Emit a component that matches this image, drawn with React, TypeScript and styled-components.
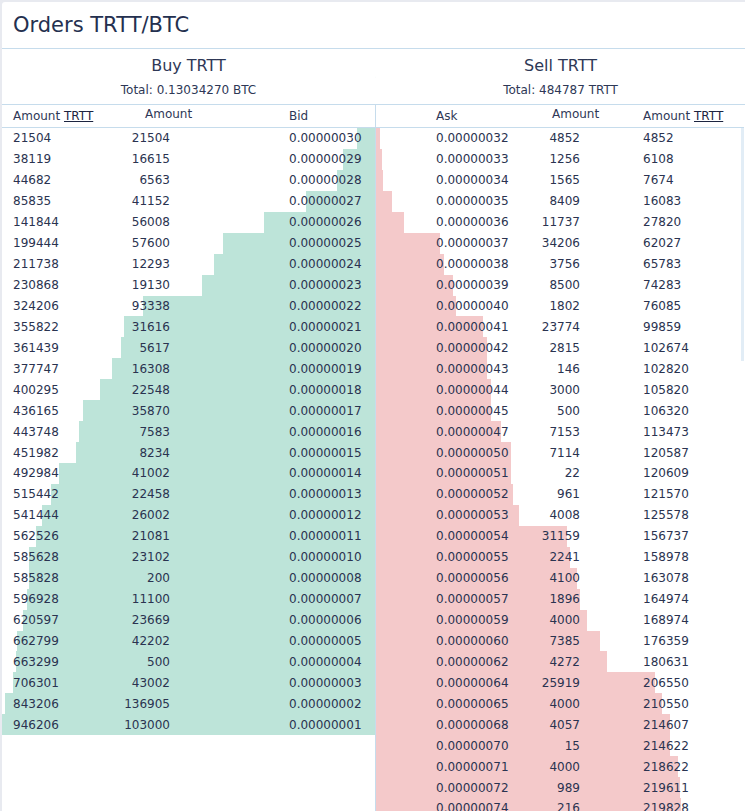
import React from 'react';
import styled, { createGlobalStyle } from 'styled-components';

const GlobalStyle = createGlobalStyle`
  html, body {
    margin: 0;
    padding: 0;
    background: #e8eaf0;
    overflow: hidden;
  }
  body {
    font-family: "DejaVu Sans", Verdana, sans-serif;
    color: #2a3350;
  }
`

const Card = styled.div`
  margin: 2px 0 0 2px;
  width: 743px;
  height: calc(100vh - 2px);
  display: flex;
  flex-direction: column;
  background: #FFFFFF;
  border-top-left-radius: 3px;
  overflow: hidden;
`
const Title = styled.div`
  height: 46px;
  display: flex;
  align-items: center;
  padding-left: 11px;
  border-bottom: 1px solid #c6dcec;
  font-size: 21px;
  color: #24304f;
`
const Summary = styled.div`
  display: grid;
  grid-template-columns: 373px 1px 369px;
  border-bottom: 1px solid #c6dcec;
  height: 55px;
`
const SideHead = styled.div`
  display: flex;
  flex-direction: column;
  align-items: center;
  padding-top: 7px;
`
const SideName = styled.div`
  font-size: 16px;
  line-height: 20px;
  color: #2e3856;
`
const SideTotal = styled.div`
  margin-top: 6px;
  font-size: 12px;
  line-height: 16px;
  color: #2e3856;
`
const Swap = styled.div`
  display: flex;
  justify-content: center;
  align-items: center;
`
const Books = styled.div`
  flex: 1;
  min-height: 0;
  display: grid;
  grid-template-columns: 373px 369px;
`
const Book = styled.div<{ $sell?: boolean }>`
  display: flex;
  flex-direction: column;
  min-height: 0;
  border-left: ${p => p.$sell ? '1px solid #c6dcec' : '0'};
`
const HeadRow = styled.div<{ $sell?: boolean }>`
  height: 22px;
  display: grid;
  grid-template-columns: ${p => p.$sell ? '116px 91px 1fr' : '132px 144px 1fr'};
  align-items: center;
  padding-left: ${p => p.$sell ? '60px' : '11px'};
  border-bottom: 1px solid #c6dcec;
  font-size: 12px;
  color: #2e3856;
`
const HeadCell = styled.div<{ $raised?: boolean }>`
  white-space: nowrap;
  padding-bottom: ${p => p.$raised ? '5px' : '0'};
`
const Unit = styled.span`
  text-decoration: underline;
  color: #1c2440;
`
const Body = styled.div`
  position: relative;
  flex: 1;
  min-height: 0;
  overflow: hidden;
`
const Row = styled.div<{ $sell?: boolean }>`
  position: relative;
  height: 20.94px;
  display: grid;
  grid-template-columns: ${p => p.$sell ? '93px 51px 63px 1fr' : '105px 52px 119px 1fr'};
  align-items: center;
  padding-left: ${p => p.$sell ? '60px' : '11px'};
  font-size: 12px;
  color: #2a3350;
`
const Depth = styled.div<{ $sell?: boolean }>`
  position: absolute;
  top: 0;
  bottom: 0;
  ${p => p.$sell ? 'left: 0;' : 'right: 0;'}
  background: ${p => p.$sell ? '#f4c9ca' : '#bde4d9'};
`
const Cell = styled.div<{ $right?: boolean }>`
  position: relative;
  white-space: nowrap;
  text-align: ${p => p.$right ? 'right' : 'left'};
`
const Thumb = styled.div`
  position: absolute;
  top: 0;
  right: 0;
  width: 3px;
  height: 233px;
  background: #e2edf6;
`

type order = [number, number, number];

const buyOrders: order[] = [
  [21504, 21504, 30], [38119, 16615, 29], [44682, 6563, 28], [85835, 41152, 27],
  [141844, 56008, 26], [199444, 57600, 25], [211738, 12293, 24], [230868, 19130, 23],
  [324206, 93338, 22], [355822, 31616, 21], [361439, 5617, 20], [377747, 16308, 19],
  [400295, 22548, 18], [436165, 35870, 17], [443748, 7583, 16], [451982, 8234, 15],
  [492984, 41002, 14], [515442, 22458, 13], [541444, 26002, 12], [562526, 21081, 11],
  [585628, 23102, 10], [585828, 200, 8], [596928, 11100, 7], [620597, 23669, 6],
  [662799, 42202, 5], [663299, 500, 4], [706301, 43002, 3], [843206, 136905, 2],
  [946206, 103000, 1],
];

const sellOrders: order[] = [
  [4852, 4852, 32], [6108, 1256, 33], [7674, 1565, 34], [16083, 8409, 35],
  [27820, 11737, 36], [62027, 34206, 37], [65783, 3756, 38], [74283, 8500, 39],
  [76085, 1802, 40], [99859, 23774, 41], [102674, 2815, 42], [102820, 146, 43],
  [105820, 3000, 44], [106320, 500, 45], [113473, 7153, 47], [120587, 7114, 50],
  [120609, 22, 51], [121570, 961, 52], [125578, 4008, 53], [156737, 31159, 54],
  [158978, 2241, 55], [163078, 4100, 56], [164974, 1896, 57], [168974, 4000, 59],
  [176359, 7385, 60], [180631, 4272, 62], [206550, 25919, 64], [210550, 4000, 65],
  [214607, 4057, 68], [214622, 15, 70], [218622, 4000, 71], [219611, 989, 72],
  [219828, 216, 74],
];

// depth bars are sized by cumulative BTC against the larger book total
const MAX_BTC = 13034270;
const BAR_SPAN = 373;

const price = (satoshi: number) => (satoshi / 1e8).toFixed(8);

const withDepth = (orders: order[]) => {
  let sum = 0;
  return orders.map(([total, amount, sat]) => {
    sum += amount * sat;
    return { total, amount, sat, width: Math.round(sum / MAX_BTC * BAR_SPAN) };
  });
};

const SwapIcon = () => (
  <svg width="40" height="20" viewBox="0 0 40 20" fill="none" stroke="#8fdad2" strokeWidth="2">
    <path d="M13 5.5 H35 M30.5 1.5 L35 5.5 L30.5 9.5" />
    <path d="M27 12.5 H5 M9.5 8.5 L5 12.5 L9.5 16.5" />
  </svg>
);

export default class App extends React.Component {
  render() {
    const buys = withDepth(buyOrders).map(o => (
      <Row key={o.sat}>
        <Depth style={{ width: o.width }} />
        <Cell>{o.total}</Cell>
        <Cell $right>{o.amount}</Cell>
        <div />
        <Cell>{price(o.sat)}</Cell>
      </Row>
    ));
    const sells = withDepth(sellOrders).map(o => (
      <Row $sell key={o.sat}>
        <Depth $sell style={{ width: o.width }} />
        <Cell>{price(o.sat)}</Cell>
        <Cell $right>{o.amount}</Cell>
        <div />
        <Cell>{o.total}</Cell>
      </Row>
    ));

    return (
      <>
        <GlobalStyle />
        <Card>
          <Title>Orders TRTT/BTC</Title>
          <Summary>
            <SideHead>
              <SideName>Buy TRTT</SideName>
              <SideTotal>Total: 0.13034270 BTC</SideTotal>
            </SideHead>
            <Swap><SwapIcon /></Swap>
            <SideHead>
              <SideName>Sell TRTT</SideName>
              <SideTotal>Total: 484787 TRTT</SideTotal>
            </SideHead>
          </Summary>
          <Books>
            <Book>
              <HeadRow>
                <HeadCell>Amount <Unit>TRTT</Unit></HeadCell>
                <HeadCell $raised>Amount</HeadCell>
                <HeadCell>Bid</HeadCell>
              </HeadRow>
              <Body>{buys}</Body>
            </Book>
            <Book $sell>
              <HeadRow $sell>
                <HeadCell>Ask</HeadCell>
                <HeadCell $raised>Amount</HeadCell>
                <HeadCell>Amount <Unit>TRTT</Unit></HeadCell>
              </HeadRow>
              <Body>
                {sells}
                <Thumb />
              </Body>
            </Book>
          </Books>
        </Card>
      </>
    );
  }
}
